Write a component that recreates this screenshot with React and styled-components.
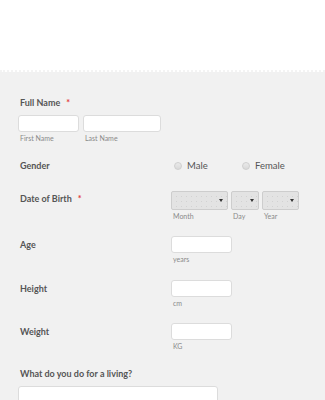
import React from "react";
import styled, { createGlobalStyle } from "styled-components";

const Global = createGlobalStyle`
  html, body { margin: 0; padding: 0; background: #f1f1f1; }
  body { font-family: Lato, "Open Sans", "Liberation Sans", sans-serif; }
  * { box-sizing: border-box; }
`;

const Header = styled.div`
  height: 72px;
  background: #fff;
  border-bottom: 2px dotted #f3f3f3;
`;

const Form = styled.div`
  background: #f1f1f1;
  padding: 0 18px 40px 18px;
  overflow: hidden;
`;

const Block = styled.div`
  padding-top: ${(p) => p.$top}px;
`;

const Row = styled.div`
  display: grid;
  grid-template-columns: 153px 1fr;
  align-items: start;
  padding-top: ${(p) => p.$top}px;
`;

const Label = styled.div`
  padding-left: 2px;
  font-size: 9px;
  font-weight: 700;
  color: #555;
  line-height: ${(p) => p.$lh || 12}px;
  display: flex;
  gap: 6px;
`;

const Star = styled.span`
  color: #e33a3a;
  font-size: 9px;
`;

const Pair = styled.div`
  display: flex;
  gap: 4px;
  margin-top: ${(p) => p.$top || 0}px;
`;

const Col = styled.div`
  display: flex;
  flex-direction: column;
`;

const Input = styled.div`
  width: ${(p) => p.$w}px;
  height: ${(p) => p.$h || 17}px;
  background: #fff;
  border: 1px solid #dcdcdc;
  border-radius: 3px;
`;

const Sub = styled.div`
  font-size: 7px;
  color: #8a8a8a;
  line-height: 10px;
  margin-top: 1px;
  padding-left: ${(p) => p.$pl ?? 2}px;
`;

const Radios = styled.div`
  display: grid;
  grid-template-columns: 68px 68px;
  padding-left: 3px;
  height: 17px;
  align-items: center;
`;

const Option = styled.label`
  display: flex;
  align-items: center;
  gap: 5px;
  font-size: 9.5px;
  color: #555;
`;

const Circle = styled.span`
  width: 8px;
  height: 8px;
  border-radius: 50%;
  border: 1px solid #cfcfcf;
  background: linear-gradient(#eaeaea, #d9d9d9);
`;

const Selects = styled.div`
  display: flex;
  gap: 3px;
`;

const SelectBox = styled.div`
  position: relative;
  width: ${(p) => p.$w}px;
  height: 19px;
  border: 1px solid #cdcdcd;
  border-radius: 2px;
  background-color: #e3e3e3;
  background-image: radial-gradient(#d2d2d2 0.5px, transparent 0.7px);
  background-size: 5px 5px;
  background-position: 2px 2px;
`;

const Arrow = styled.span`
  position: absolute;
  right: 4px;
  top: 7px;
  width: 0;
  height: 0;
  border-left: 2px solid transparent;
  border-right: 2px solid transparent;
  border-top: 3px solid #333;
`;

const Textarea = styled.div`
  width: 200px;
  height: 40px;
  margin-top: 6px;
  background: #fff;
  border: 1px solid #dcdcdc;
  border-radius: 3px;
`;

function Select({ w, label }) {
  return (
    <Col>
      <SelectBox $w={w}>
        <Arrow />
      </SelectBox>
      <Sub>{label}</Sub>
    </Col>
  );
}

function Measure({ top, label, unit }) {
  return (
    <Row $top={top}>
      <Label $lh={17}>{label}</Label>
      <Col>
        <Input $w={61} />
        <Sub>{unit}</Sub>
      </Col>
    </Row>
  );
}

export default function App() {
  return (
    <>
      <Global />
      <Header />
      <Form>
        <Block $top={25}>
          <Label>
            Full Name <Star>*</Star>
          </Label>
          <Pair $top={6}>
            <Col>
              <Input $w={61} />
              <Sub>First Name</Sub>
            </Col>
            <Col>
              <Input $w={78} />
              <Sub>Last Name</Sub>
            </Col>
          </Pair>
        </Block>

        <Row $top={14}>
          <Label $lh={17}>Gender</Label>
          <Radios>
            <Option>
              <Circle />
              Male
            </Option>
            <Option>
              <Circle />
              Female
            </Option>
          </Radios>
        </Row>

        <Row $top={17}>
          <Label $lh={15}>
            Date of Birth <Star>*</Star>
          </Label>
          <Selects>
            <Select w={57} label="Month" />
            <Select w={28} label="Day" />
            <Select w={37} label="Year" />
          </Selects>
        </Row>

        <Measure top={15} label="Age" unit="years" />
        <Measure top={16} label="Height" unit="cm" />
        <Measure top={15} label="Weight" unit="KG" />

        <Block $top={17}>
          <Label>What do you do for a living?</Label>
          <Textarea />
        </Block>
      </Form>
    </>
  );
}
